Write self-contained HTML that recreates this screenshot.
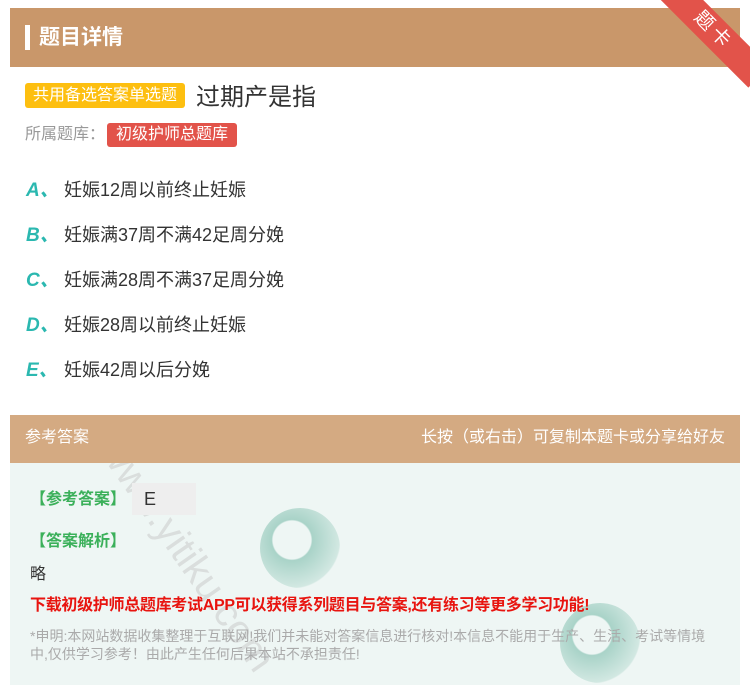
<!DOCTYPE html>
<html style="overflow:hidden"><head><meta charset="utf-8">
<style>
html,body{overflow:hidden}
body{margin:0;width:750px;height:685px;background:#fff;font-family:"Liberation Sans","Noto Sans CJK SC",sans-serif;position:relative;overflow:hidden}
.hd{position:absolute;left:10px;top:8px;width:730px;height:59px;background:#c9976a}
.hd .bar{position:absolute;left:15px;top:17px;width:5px;height:25px;background:#fff}
.hd .t{position:absolute;left:29px;top:13px;color:#fff;font-size:21px;font-weight:bold}
.rib{position:absolute;right:-28px;top:16px;width:130px;height:30px;background:#e2534a;transform:rotate(45deg);color:#fff;font-size:19px;text-align:center;line-height:30px;letter-spacing:4px}
.tag{position:absolute;left:25px;top:83px;background:#fdbf10;color:#fff;font-size:16px;padding:0 8px;height:25px;line-height:25px;border-radius:3px}
.q{position:absolute;left:196px;top:77px;font-size:24px;color:#333}
.lib{position:absolute;left:25px;top:120px;font-size:16px;color:#999}
.lib span{display:inline-block;background:#e2534a;color:#fff;padding:0 9px;height:24px;line-height:24px;border-radius:3px;margin-left:2px}
.op{position:absolute;left:26px;font-size:18px;color:#333}
.op b{color:#2bb8b0;font-style:italic;font-size:19px;display:inline-block;width:38px}
.ah{position:absolute;left:10px;top:415px;width:730px;height:48px;background:#d4aa82;color:#fff;font-size:16px;line-height:46px}
.ab{position:absolute;left:10px;top:463px;width:730px;height:222px;background:#eef6f4;overflow:hidden}
.g{position:absolute;color:#3bb05a;font-size:16px;font-weight:bold}
.swirl{position:absolute;border-radius:50%;background:radial-gradient(circle at 40% 40%,#eef6f4 28%,#a9d3c8 30%,#d2e8e2 70%,transparent 72%)}
.wm{position:absolute;color:#c8c8c8;font-size:40px;transform:rotate(55deg);opacity:.5;white-space:nowrap}
</style></head><body>
<div class="hd"><div class="bar"></div><div class="t">题目详情</div></div>
<div class="rib">题卡</div>
<div class="tag">共用备选答案单选题</div>
<div class="q">过期产是指</div>
<div class="lib">所属题库：<span>初级护师总题库</span></div>
<div class="op" style="top:175px"><b>A、</b>妊娠12周以前终止妊娠</div>
<div class="op" style="top:220px"><b>B、</b>妊娠满37周不满42足周分娩</div>
<div class="op" style="top:265px"><b>C、</b>妊娠满28周不满37足周分娩</div>
<div class="op" style="top:310px"><b>D、</b>妊娠28周以前终止妊娠</div>
<div class="op" style="top:355px"><b>E、</b>妊娠42周以后分娩</div>
<div class="ah"><span style="position:absolute;left:15px">参考答案</span><span style="position:absolute;right:15px">长按（或右击）可复制本题卡或分享给好友</span></div>
<div class="ab">
<div class="swirl" style="left:250px;top:45px;width:80px;height:80px"></div>
<div class="swirl" style="left:550px;top:140px;width:80px;height:80px"></div>
<div class="wm" style="left:40px;top:70px">www.yitiku.com</div>
<div class="g" style="left:20px;top:22px">【参考答案】</div>
<div style="position:absolute;left:122px;top:20px;width:64px;height:32px;background:#eee;font-size:18px;color:#333;padding-left:12px;line-height:32px;box-sizing:border-box">E</div>
<div class="g" style="left:20px;top:64px">【答案解析】</div>
<div style="position:absolute;left:20px;top:97px;font-size:16px;color:#333">略</div>
<div style="position:absolute;left:20px;top:128px;font-size:16px;color:#e8140f;font-weight:bold;letter-spacing:-0.3px;white-space:nowrap">下载初级护师总题库考试APP可以获得系列题目与答案,还有练习等更多学习功能!</div>
<div style="position:absolute;left:20px;top:164px;width:680px;font-size:14px;color:#aaa;line-height:18px">*申明:本网站数据收集整理于互联网!我们并未能对答案信息进行核对!本信息不能用于生产、生活、考试等情境<br>中,仅供学习参考！由此产生任何后果本站不承担责任!</div>
</div>
</body></html>
